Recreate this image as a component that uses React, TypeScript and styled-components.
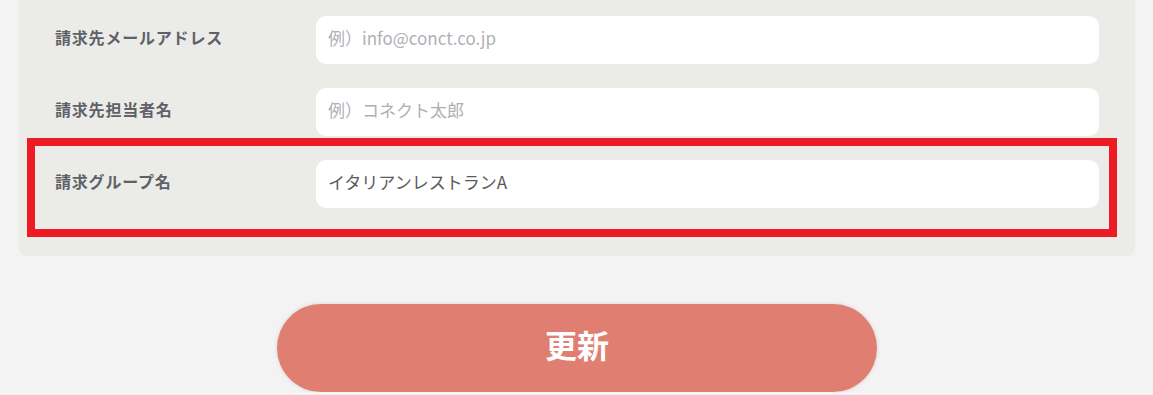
import styled, { createGlobalStyle } from "styled-components";

const GlobalStyle = createGlobalStyle`
  html, body {
    margin: 0;
    padding: 0;
    background-color: #f2f3f2;
    font-family: "Noto Sans CJK JP", "Noto Sans", sans-serif;
  }
`;

const Wrapper = styled.div`
  padding: 0 18px 0 19px;
`;

const Panel = styled.div`
  background-color: #ebece8;
  border-radius: 0 0 8px 8px;
  padding: 16px 36px 48px;
  display: flex;
  flex-direction: column;
  gap: 24px;
`;

const Row = styled.div`
  position: relative;
  display: grid;
  grid-template-columns: 261px 1fr;
  align-items: center;
  height: 48px;
`;

// red annotation box drawn over the marked row
const Highlight = styled.div`
  position: absolute;
  top: -22px;
  bottom: -29px;
  left: -28px;
  right: -18px;
  border: 8px solid #ed1c24;
  pointer-events: none;
`;

const Label = styled.label`
  font-size: 16px;
  font-weight: 700;
  letter-spacing: 0.8px;
  color: #5f6168;
  padding-bottom: 6px;
`;

const Input = styled.input`
  box-sizing: border-box;
  height: 48px;
  width: 100%;
  border: none;
  outline: none;
  border-radius: 10px;
  background-color: #ffffff;
  padding: 0 12px 5px;
  font-family: "Noto Sans CJK JP", "Noto Sans", sans-serif;
  font-size: 17px;
  color: #5a5a5a;

  &::placeholder {
    color: #aeb0b5;
  }
`;

const Footer = styled.div`
  display: flex;
  justify-content: center;
  padding-top: 48px;
`;

const SubmitButton = styled.button`
  width: 600px;
  height: 88px;
  border: none;
  border-radius: 44px;
  background-color: #e07f71;
  color: #ffffff;
  font-family: "Noto Sans CJK JP", "Noto Sans", sans-serif;
  font-size: 32px;
  font-weight: 700;
  padding: 0 0 8px;
  box-shadow: 0 0 4px rgba(0, 0, 0, 0.12);
  cursor: pointer;
`;

const fields = [
  { label: "請求先メールアドレス", placeholder: "例）info@conct.co.jp", value: "" },
  { label: "請求先担当者名", placeholder: "例）コネクト太郎", value: "" },
  { label: "請求グループ名", placeholder: "", value: "イタリアンレストランA", marked: true },
];

function App() {
  return (
    <>
      <GlobalStyle />
      <Wrapper>
        <Panel>
          {fields.map((f) => (
            <Row key={f.label}>
              <Label>{f.label}</Label>
              <Input placeholder={f.placeholder} defaultValue={f.value} />
              {f.marked && <Highlight />}
            </Row>
          ))}
        </Panel>
        <Footer>
          <SubmitButton>更新</SubmitButton>
        </Footer>
      </Wrapper>
    </>
  );
}

export default App;
